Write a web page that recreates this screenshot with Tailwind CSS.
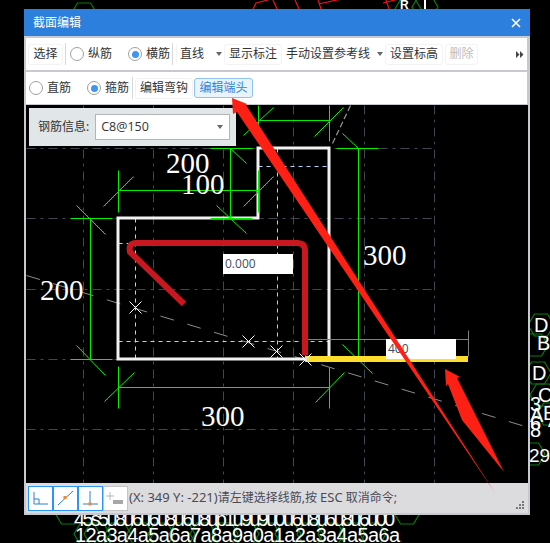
<!DOCTYPE html>
<html lang="zh">
<head>
<meta charset="UTF-8">
<title>截面编辑</title>
<script src="https://cdn.jsdelivr.net/npm/@tailwindcss/browser@4"></script>
</head>
<body class="relative w-[550px] h-[543px] overflow-hidden bg-black font-['Noto_Sans','Noto_Sans_CJK_SC',sans-serif] text-[12px] text-[#333]">

<!-- drawing behind the dialog -->
<svg class="absolute left-0 top-0" width="550" height="543" viewBox="0 0 550 543">
  <defs>
    <polygon id="hex" points="13,0 6.5,11 -6.5,11 -13,0 -6.5,-11 6.5,-11" fill="none" stroke="#0c7a0c" stroke-width="1.2"/>
  </defs>
  <path d="M253 9 L256 3 L268 0 M273 0 L277 9 M295 0 L299 9 M318 0 L321 9 M319 4 L341 -1 M383 3 L395 0 M386 0 L389 9" fill="none" stroke="#f0101a" stroke-width="1.2"/>
  <use href="#hex" x="84" y="14"/>
  <use href="#hex" x="425" y="7"/>
  <use href="#hex" x="408" y="9"/>
  <use href="#hex" x="68" y="513"/>
  <use href="#hex" x="407" y="513"/>
  <use href="#hex" x="87" y="534"/><use href="#hex" x="97" y="534"/><use href="#hex" x="118" y="534"/><use href="#hex" x="140" y="534"/><use href="#hex" x="161" y="534"/><use href="#hex" x="182" y="534"/><use href="#hex" x="203" y="534"/><use href="#hex" x="225" y="534"/><use href="#hex" x="246" y="534"/><use href="#hex" x="267" y="534"/><use href="#hex" x="288" y="534"/><use href="#hex" x="310" y="534"/><use href="#hex" x="331" y="534"/><use href="#hex" x="352" y="534"/><use href="#hex" x="373" y="534"/>
  <use href="#hex" x="541" y="325"/><use href="#hex" x="535" y="345"/><use href="#hex" x="538" y="373"/><use href="#hex" x="543" y="395"/><use href="#hex" x="550" y="414"/><use href="#hex" x="532" y="454"/>
  <g fill="#fff" font-family="Liberation Sans, sans-serif" font-size="20">
    <text x="75" y="542" textLength="325" lengthAdjust="spacing">12a3a4a5a6a7a8a9a0a1a2a3a4a5a6a</text>
    <text x="74" y="526" textLength="321" lengthAdjust="spacing">45s5u8u6u6u8u6u8up1u9u9u0u6u8u6u8u6u00</text>
    <text x="534" y="332">D</text>
    <text x="537" y="350">B</text>
    <text x="532" y="380">D</text>
    <text x="538" y="402">C</text>
    <text x="543" y="420">E</text>
    <text x="548" y="427">A</text>
    <text x="530" y="411">3</text>
    <text x="530" y="422">A</text>
    <text x="530" y="430">6</text>
    <text x="530" y="437">8</text>
    <text x="529" y="462" font-size="19">29</text>
    <text x="400" y="9" font-size="12" font-weight="bold">R</text>
  </g>
  <rect x="424" y="0" width="2" height="10" fill="#fff"/>
</svg>

<!-- dialog -->
<div class="absolute left-[24px] top-[9px] w-[506px] h-[506px] flex flex-col bg-[#c6c9ce]">
  <div class="h-[27px] shrink-0 bg-[#2c7fdd] flex items-center pl-[9px] pr-[9px] text-white">
    <span>截面编辑</span>
    <svg class="ml-auto" width="10" height="10" viewBox="0 0 10 10"><path d="M1 1 L9 9 M9 1 L1 9" stroke="#fff" stroke-width="1.6"/></svg>
  </div>

  <!-- toolbar 1 -->
  <div class="mt-[2px] ml-[2px] mr-[3px] h-[32px] shrink-0 bg-white flex items-center">
    <div class="ml-[2px] w-[35px] h-[21px] flex items-center justify-center rounded-[3px] border border-[#f3f3f3]">选择</div>
    <div class="ml-[2px] w-px h-[22px] bg-[#d8d8d8]"></div>
    <div class="ml-[4px] w-[14px] h-[14px] rounded-full border border-[#a0a0a0]"></div>
    <span class="ml-[4px]">纵筋</span>
    <div class="ml-[16px] w-[14px] h-[14px] rounded-full border border-[#a0a0a0] flex items-center justify-center"><div class="w-[7px] h-[7px] rounded-full bg-[#3f95f0]"></div></div>
    <span class="ml-[4px]">横筋</span>
    <div class="ml-[2px] w-px h-[22px] bg-[#d8d8d8]"></div>
    <div class="ml-[3px] w-[48px] h-[21px] flex items-center pl-[3px] rounded-[3px] border-l border-[#f3f3f3]">
      <span>直线</span>
      <svg class="ml-[12px]" width="6" height="4" viewBox="0 0 6 4"><path d="M0 0 H6 L3 4 Z" fill="#666"/></svg>
    </div>
    <div class="w-[58px] h-[21px] flex items-center justify-center rounded-[3px] border border-[#f3f3f3]">显示标注</div>
    <div class="w-[103px] h-[21px] flex items-center pl-[4px]">
      <span>手动设置参考线</span>
      <svg class="ml-[7px]" width="6" height="4" viewBox="0 0 6 4"><path d="M0 0 H6 L3 4 Z" fill="#666"/></svg>
    </div>
    <div class="w-[58px] h-[21px] flex items-center justify-center rounded-[3px] border border-[#f3f3f3]">设置标高</div>
    <div class="ml-[2px] w-[33px] h-[21px] flex items-center justify-center rounded-[3px] border border-[#f3f3f3] text-[#bdbdbd]">删除</div>
    <svg class="ml-auto mr-[3px]" width="8" height="7" viewBox="0 0 8 7"><path d="M0 0 L3.5 3.5 L0 7 Z M4 0 L7.5 3.5 L4 7 Z" fill="#444"/></svg>
  </div>

  <!-- toolbar 2 -->
  <div class="mt-[2px] ml-[2px] mr-[3px] h-[32px] shrink-0 bg-white flex items-center">
    <div class="ml-[3px] w-[14px] h-[14px] rounded-full border border-[#a0a0a0]"></div>
    <span class="ml-[4px]">直筋</span>
    <div class="ml-[16px] w-[14px] h-[14px] rounded-full border border-[#a0a0a0] flex items-center justify-center"><div class="w-[7px] h-[7px] rounded-full bg-[#3f95f0]"></div></div>
    <span class="ml-[4px]">箍筋</span>
    <div class="ml-[3px] w-px h-[22px] bg-[#d8d8d8]"></div>
    <div class="ml-[2px] w-[58px] h-[21px] flex items-center justify-center rounded-[3px] border border-[#f3f3f3]">编辑弯钩</div>
    <div class="ml-px w-[59px] h-[20px] flex items-center justify-center rounded-[3px] border border-[#8fc3f2] bg-[#e8f3fc] text-[#2f86d8]">编辑端头</div>
  </div>

  <!-- canvas -->
  <div class="relative mt-px ml-[2px] mr-[2px] h-[378px] shrink-0 bg-black overflow-hidden">
    <svg class="absolute left-0 top-0" width="502" height="378" viewBox="26 105 502 378" fill="none">
      <g transform="translate(0.5 0.5)">
        <g stroke="#3f4654" stroke-width="1" stroke-dasharray="9 5 3 5">
          <path d="M83 105 V483 M153 105 V483 M223 105 V483 M293 105 V483 M364 105 V483 M434 105 V483"/>
          <path d="M26 148 H434 M26 218 H434 M26 289 H434 M26 359 H434 M26 429 H434"/>
        </g>
        <path d="M26 275 L528 427" stroke="#8c8c8c" stroke-dasharray="14 14"/>
        <path d="M350 105 L332 143" stroke="#9a9a9a" stroke-width="1.2" stroke-dasharray="6 3"/>
        <path d="M135 218 V359 M277 148 V359 M118 341 H329 M258 166 H329 M118 243 H130" stroke="#b4d6ff" stroke-dasharray="4 4"/>
      </g>

      <path d="M118 218 H258 V148 H329 V359 H118 Z" stroke="#f2f2f2" stroke-width="3"/>

      <g transform="translate(0.5 0.5)" stroke="#00f000" stroke-width="1">
        <path d="M118 190 H258 M118 170 V212 M103 206 L133 176 M258 170 V212 M243 206 L273 176"/>
        <path d="M258 120 H329 M258 105 V141 M243 135 L273 107 M329 105 V141 M314 136 L343 107"/>
        <path d="M230 148 V218 M210 148 H252 M210 218 H252 M230 148 L246 163 M216 205 L246 233"/>
        <path d="M90 218 V359 M70 218 H112 M70 359 H112 M76 205 L105 234 M76 345 L105 375"/>
        <path d="M118 387 H329 M118 366 V408 M104 401 L134 372 M329 367 V408 M315 402 L344 372"/>
        <path d="M358 148 V359 M336 148 H378 M342 133 L358 148 M342 344 L372 373"/>
      </g>

      <g transform="translate(0.5 0.5)">
        <path d="M305 339 H468 M468 330 V356" stroke="#808080"/>
        <path d="M305 330 V356" stroke="#2a8a8a"/>
      </g>

      <path d="M184 304 L130 252 Q128 243 136 243 H297 Q305 243 305 251 V355" stroke="#c8171e" stroke-width="6"/>
      <rect x="305" y="356" width="163" height="6" fill="#ffdd2b"/>

      <path transform="translate(0.5 0.5)" d="M129 301 L141 313 M141 301 L129 313 M242 335 L254 347 M254 335 L242 347 M270 345 L282 357 M282 345 L270 357 M299 353 L311 365 M311 353 L299 365" stroke="#fff" stroke-width="1"/>

      <g fill="#fff" font-family="Liberation Serif, serif" font-size="29">
        <text x="166" y="173">200</text>
        <text x="181" y="194">100</text>
        <text x="40" y="300">200</text>
        <text x="363" y="265">300</text>
        <text x="201" y="426">300</text>
      </g>
    </svg>

    <div class="absolute left-[197px] top-[149px] w-[70px] h-[20px] bg-white pl-[2px] leading-[20px] text-[#444b5a] font-['Open_Sans',sans-serif]">0.000</div>
    <div class="absolute left-[360px] top-[234px] w-[70px] h-[20px] bg-white pl-[2px] leading-[20px] text-[#444b5a] font-['Open_Sans',sans-serif]">400</div>

    <!-- rebar info panel -->
    <div class="absolute left-[3px] top-[3px] w-[207px] h-[38px] bg-[#e1e6e8] flex items-center pl-[9px]">
      <span>钢筋信息:</span>
      <div class="ml-[6px] w-[135px] h-[26px] bg-white border border-[#b4b4b4] flex items-center pl-[5px] text-[12.5px] font-['Open_Sans',sans-serif]">
        <span>C8@150</span>
        <svg class="ml-auto mr-[6px]" width="6" height="4" viewBox="0 0 6 4"><path d="M0 0 H6 L3 4 Z" fill="#666"/></svg>
      </div>
    </div>
  </div>

  <!-- status bar -->
  <div class="ml-[2px] mr-[2px] h-[30px] shrink-0 bg-[#dcdcde] flex items-center pl-[2px]">
    <div class="w-[25px] h-[25px] bg-white border border-[#2d95f5]">
      <svg width="23" height="23" viewBox="0 0 23 23" fill="none"><path d="M5 5 V17 H19 M5 12 H10 V17" stroke="#2f7fd0"/></svg>
    </div>
    <div class="w-[25px] h-[25px] bg-white border border-[#2d95f5]">
      <svg width="23" height="23" viewBox="0 0 23 23" fill="none"><path d="M4 18 L19 4" stroke="#2f7fd0"/><rect x="9.5" y="9" width="3" height="3" fill="#f08a30"/></svg>
    </div>
    <div class="w-[25px] h-[25px] bg-white border border-[#2d95f5]">
      <svg width="23" height="23" viewBox="0 0 23 23" fill="none"><path d="M11 4 V17 M4 17 H19" stroke="#2f7fd0"/><rect x="9.5" y="15.5" width="3" height="3" fill="#f08a30"/></svg>
    </div>
    <div class="w-[25px] h-[25px] bg-white border border-[#c4c4c4]">
      <svg width="23" height="23" viewBox="0 0 23 23" fill="none"><path d="M6 5 V13 M2 9 H10" stroke="#b8b8b8"/><rect x="9" y="13" width="10" height="4" fill="#a8a8a8"/></svg>
    </div>
    <span class="ml-px text-[#4a4a55]"><span class="text-[13px]">(X: 349 Y: -221)</span>请左键选择线筋,按 <span class="text-[13px]">ESC</span> 取消命令;</span>
    <svg class="ml-auto mr-[3px] mt-[14px]" width="9" height="8" viewBox="0 0 9 8"><path d="M6 0 H8 V2 H6 Z M3 3 H5 V5 H3 Z M6 3 H8 V5 H6 Z M0 6 H2 V8 H0 Z M3 6 H5 V8 H3 Z M6 6 H8 V8 H6 Z" fill="#777"/></svg>
  </div>
</div>

<!-- red annotation arrows -->
<svg class="absolute left-0 top-0 pointer-events-none" width="550" height="543" viewBox="0 0 550 543">
  <polygon points="232,98 247,104 246,105 495,493 237,112 233,114" fill="#ff2015"/>
  <polygon points="445,369 460,377 457,378 504,472 462,420 448,384 446,386" fill="#ff2015"/>
</svg>
</body>
</html>
